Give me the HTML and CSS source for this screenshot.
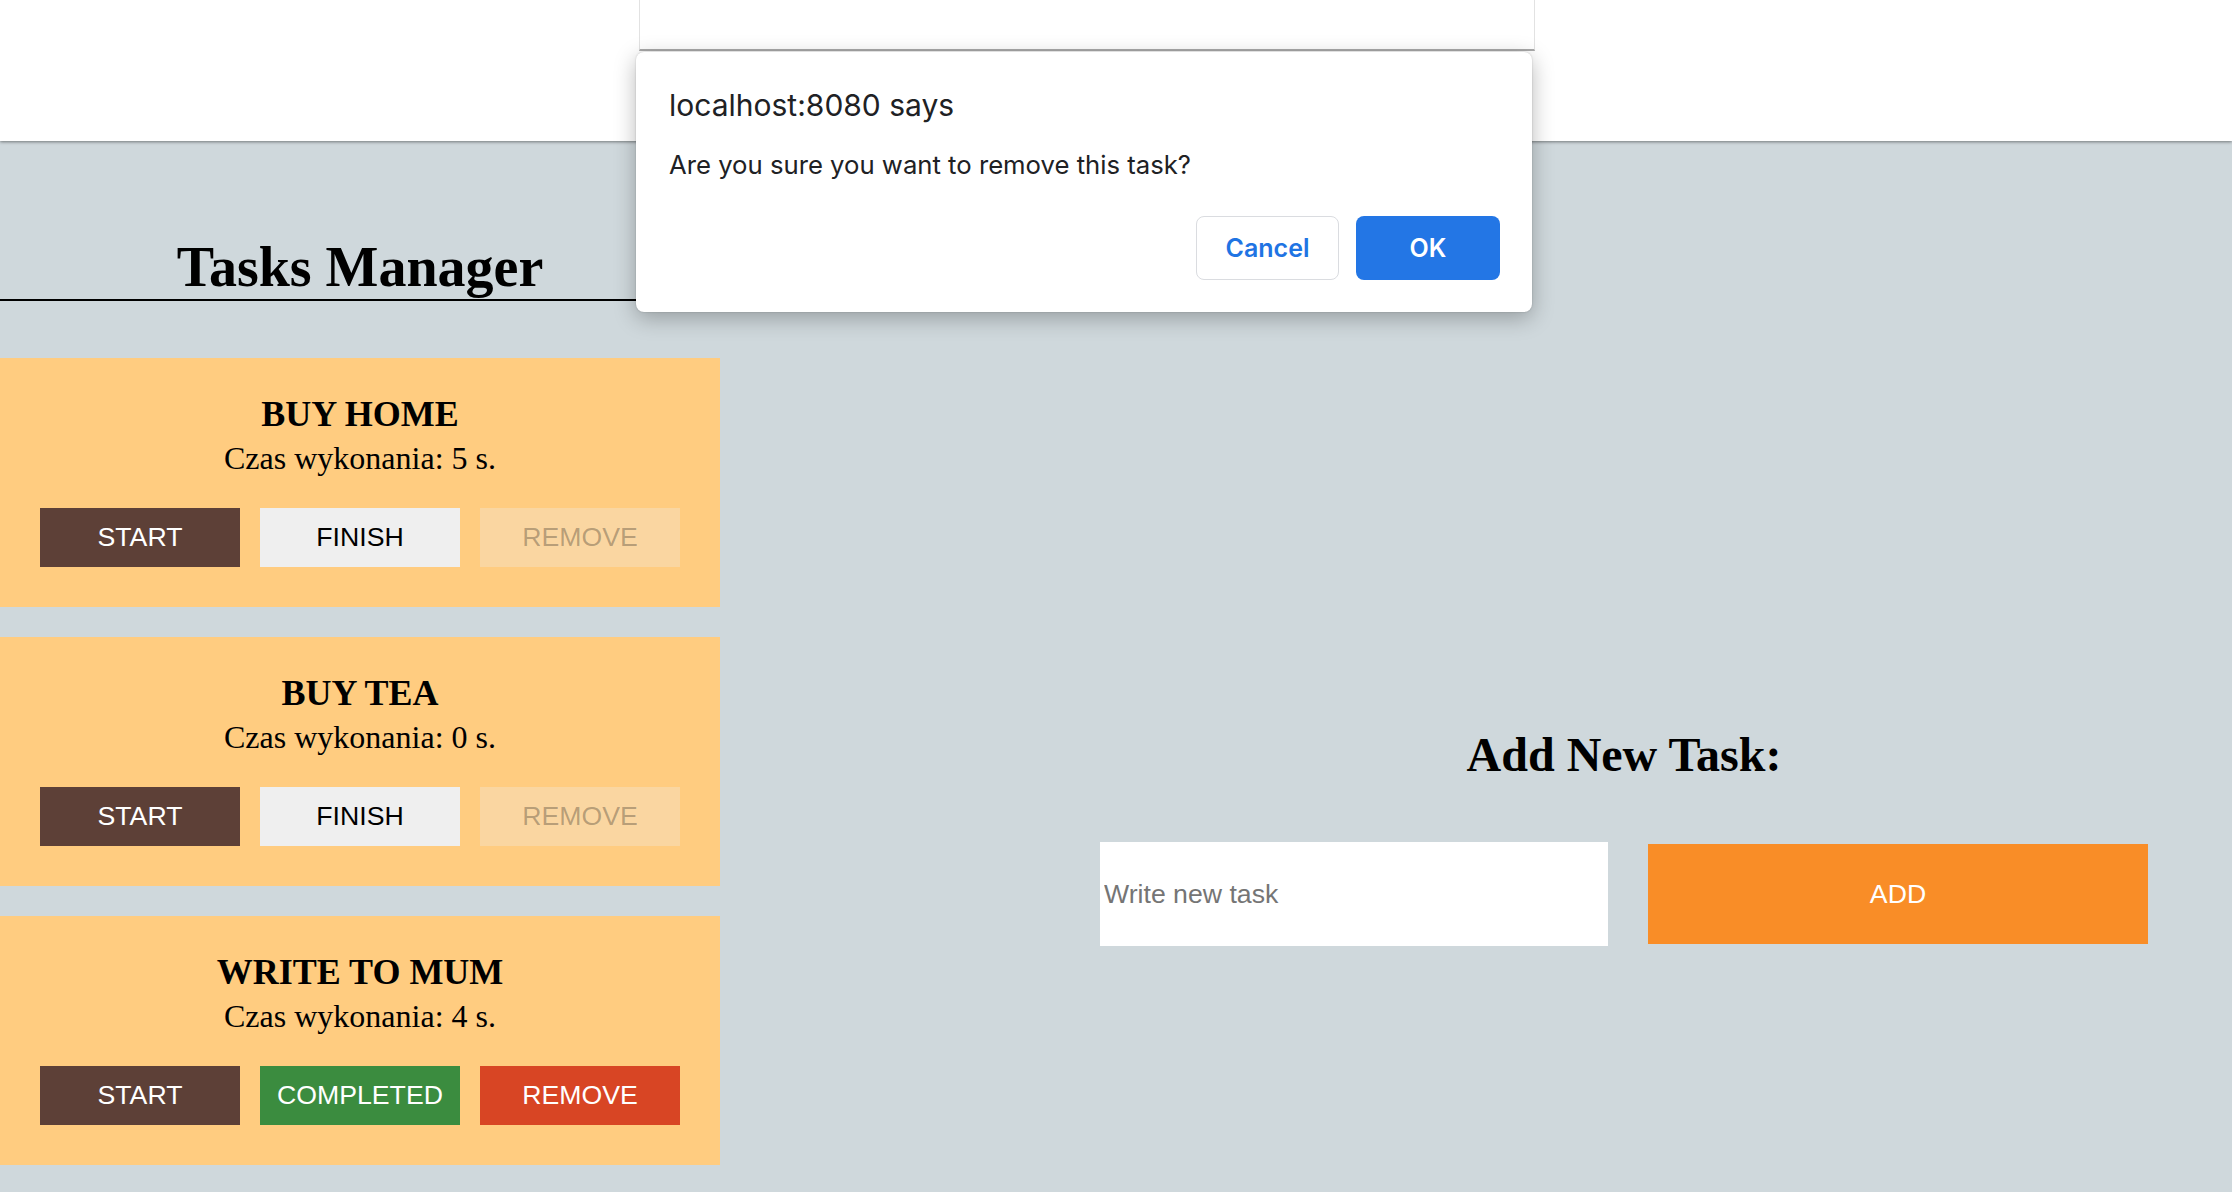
FILE: index.html
```html
<!DOCTYPE html>
<html lang="en">
<head>
<meta charset="utf-8">
<title>Tasks Manager</title>
<link rel="stylesheet" href="styles.css">
</head>
<body>
<header class="topbar"></header>
<main class="layout">
  <section class="tasks">
    <h1 class="tasks__title">Tasks Manager</h1>
    <div class="task">
      <h3 class="task__name">BUY HOME</h3>
      <p class="task__time">Czas wykonania: 5 s.</p>
      <div class="task__actions">
        <button class="btn btn--start">START</button>
        <button class="btn btn--finish">FINISH</button>
        <button class="btn btn--disabled" disabled>REMOVE</button>
      </div>
    </div>
    <div class="task">
      <h3 class="task__name">BUY TEA</h3>
      <p class="task__time">Czas wykonania: 0 s.</p>
      <div class="task__actions">
        <button class="btn btn--start">START</button>
        <button class="btn btn--finish">FINISH</button>
        <button class="btn btn--disabled" disabled>REMOVE</button>
      </div>
    </div>
    <div class="task">
      <h3 class="task__name">WRITE TO MUM</h3>
      <p class="task__time">Czas wykonania: 4 s.</p>
      <div class="task__actions">
        <button class="btn btn--start">START</button>
        <button class="btn btn--completed">COMPLETED</button>
        <button class="btn btn--remove">REMOVE</button>
      </div>
    </div>
  </section>
  <section class="add">
    <h2 class="add__title">Add New Task:</h2>
    <form class="add__form">
      <input class="add__input" type="text" placeholder="Write new task">
      <button class="add__btn" type="button">ADD</button>
    </form>
  </section>
</main>
<div class="browser-strip"></div>
<div class="dialog">
  <div class="dialog__title">localhost:8080 says</div>
  <div class="dialog__msg">Are you sure you want to remove this task?</div>
  <div class="dialog__actions">
    <button class="dbtn dbtn--cancel">Cancel</button>
    <button class="dbtn dbtn--ok">OK</button>
  </div>
</div>
</body>
</html>
```
FILE: styles.css
```css
html, body {
  margin: 0;
  padding: 0;
}
body {
  background: #cfd8dc;
  font-family: "Liberation Serif", "Times New Roman", serif;
  color: #000;
  overflow: hidden;
}
.topbar {
  height: 141px;
  background: #fff;
  box-shadow: 0 1px 3px rgba(0, 0, 0, 0.45);
  position: relative;
  z-index: 1;
}
.layout {
  display: flex;
  align-items: flex-start;
}
.tasks {
  width: 720px;
  flex-shrink: 0;
}
.tasks__title {
  margin: 94px 0 57px;
  font-size: 56px;
  line-height: 64px;
  font-weight: bold;
  text-align: center;
  border-bottom: 2px solid #000;
}
.task {
  background: #ffcc80;
  padding: 35px 40px 40px;
  margin-bottom: 30px;
  text-align: center;
}
.task__name {
  margin: 0 0 6px;
  font-size: 36px;
  line-height: 42px;
  font-weight: bold;
}
.task__time {
  margin: 0;
  font-size: 32px;
  line-height: 35px;
}
.task__actions {
  display: flex;
  gap: 20px;
  margin-top: 32px;
}
.btn {
  width: 200px;
  height: 59px;
  padding: 0;
  border: none;
  border-radius: 0;
  font-family: "Liberation Sans", Arial, sans-serif;
  font-size: 26.67px;
  color: #fff;
}
.btn--start { background: #5d4037; }
.btn--finish { background: #efefef; color: #000; }
.btn--disabled { background: rgba(239, 239, 239, 0.3); color: rgba(16, 16, 16, 0.3); }
.btn--completed { background: #3b8c3f; }
.btn--remove { background: #d84524; }

.add {
  flex: 1;
  padding: 586px 0 0 296px;
}
.add__title {
  margin: 0;
  font-size: 48px;
  line-height: 55px;
  font-weight: bold;
  text-align: center;
}
.add__form {
  margin: 60px 0 0;
  display: flex;
  justify-content: center;
  align-items: center;
  gap: 40px;
}
.add__input {
  box-sizing: border-box;
  width: 508px;
  height: 104px;
  margin: 0;
  padding: 0 2px;
  border: 2px solid #fff;
  background: #fff;
  outline: none;
  font-family: "Liberation Sans", Arial, sans-serif;
  font-size: 26.67px;
  color: #000;
}
.add__input::placeholder { color: #757575; }
.add__btn {
  width: 500px;
  height: 100px;
  border: none;
  padding: 0;
  background: #f98d27;
  color: #fff;
  font-family: "Liberation Sans", Arial, sans-serif;
  font-size: 26.67px;
}

.browser-strip {
  position: absolute;
  left: 639px;
  top: 0;
  width: 896px;
  height: 51px;
  box-sizing: border-box;
  background: #fff;
  border-left: 1px solid #e2e2e2;
  border-right: 1px solid #e2e2e2;
  border-bottom: 2px solid #a9a9a9;
  z-index: 2;
}
.dialog {
  position: absolute;
  left: 636px;
  top: 52px;
  width: 896px;
  height: 260px;
  box-sizing: border-box;
  padding: 36px 32px 32px 33px;
  background: #fff;
  border-radius: 8px;
  box-shadow: 0 6px 22px rgba(0, 0, 0, 0.28), 0 0 2px rgba(0, 0, 0, 0.2);
  font-family: Inter, "Noto Sans", sans-serif;
  color: #202124;
  z-index: 3;
}
.dialog__title {
  font-size: 30px;
  line-height: 34px;
}
.dialog__msg {
  margin-top: 27px;
  font-size: 25.7px;
  line-height: 31px;
}
.dialog__actions {
  margin-top: 36px;
  display: flex;
  justify-content: flex-end;
  gap: 17px;
}
.dbtn {
  box-sizing: border-box;
  width: 143px;
  height: 64px;
  border-radius: 8px;
  font-family: Inter, "Noto Sans", sans-serif;
  font-size: 25px;
  font-weight: 600;
  padding: 0;
}
.dbtn--cancel {
  background: #fff;
  border: 1px solid #dadce0;
  color: #1f74e3;
}
.dbtn--ok {
  width: 144px;
  background: #2376e5;
  border: none;
  color: #fff;
}
```
